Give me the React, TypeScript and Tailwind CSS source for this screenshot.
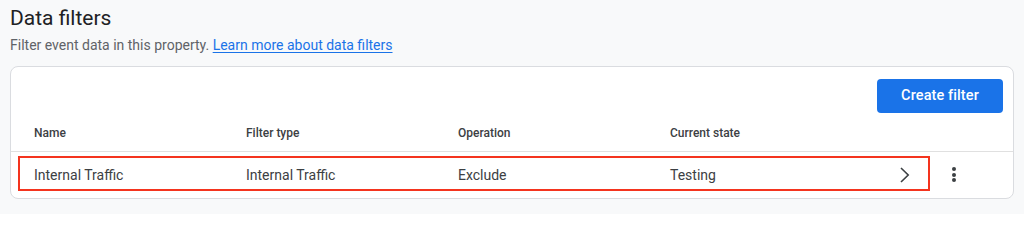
import React from "react";

const cols = ["Name", "Filter type", "Operation", "Current state"];
const vals = ["Internal Traffic", "Internal Traffic", "Exclude", "Testing"];

export default function App() {
  return (
    <div
      className="w-[1024px] h-[214px] bg-[#f8f9fa] px-[10px] pt-[4px] overflow-hidden"
      style={{ fontFamily: "Roboto, 'Noto Sans', Arial, sans-serif" }}
    >
      <h1 className="text-[21px] leading-[28px] text-[#202124] font-normal">Data filters</h1>
      <p className="mt-[3px] text-[14px] leading-[20px] text-[#5f6368]">
        Filter event data in this property.{" "}
        <a className="text-[#1a73e8] underline underline-offset-2">Learn more about data filters</a>
      </p>
      <div className="mt-[11px] w-[1004px] h-[133px] bg-white border border-[#dadce0] rounded-[8px] overflow-hidden">
        <div className="flex justify-end pt-[12px] pr-[10px]">
          <button className="w-[126px] h-[34px] rounded-[4px] bg-[#1a73e8] text-white text-[14.5px] font-medium tracking-[0.1px]">
            Create filter
          </button>
        </div>
        <div className="flex h-[39px] items-center pl-[23px] pt-[2px] border-b border-[#e0e0e0]">
          {cols.map((c) => (
            <div key={c} className="w-[212px] text-[12px] font-medium text-[#3c4043]">
              {c}
            </div>
          ))}
        </div>
        <div className="flex items-center pt-[4px] pl-[7px]">
          <div className="flex items-center w-[912px] h-[35px] border-2 border-[#f4341e] pl-[14px] pt-[4px]">
            {vals.map((v, i) => (
              <div key={i} className="w-[212px] text-[14px] text-[#3c4043]">
                {v}
              </div>
            ))}
            <svg className="ml-[17px] mt-[-2px]" width="12" height="16" viewBox="0 0 12 16">
              <path d="M2 1 L9.2 8 L2 15" fill="none" stroke="#3c4043" strokeWidth="1.6" />
            </svg>
          </div>
          <div className="ml-[22px] flex flex-col items-center gap-[1.5px] mt-[2px]">
            <span className="w-[4px] h-[4px] rounded-full bg-[#3c4043]" />
            <span className="w-[4px] h-[4px] rounded-full bg-[#3c4043]" />
            <span className="w-[4px] h-[4px] rounded-full bg-[#3c4043]" />
          </div>
        </div>
      </div>
    </div>
  );
}
